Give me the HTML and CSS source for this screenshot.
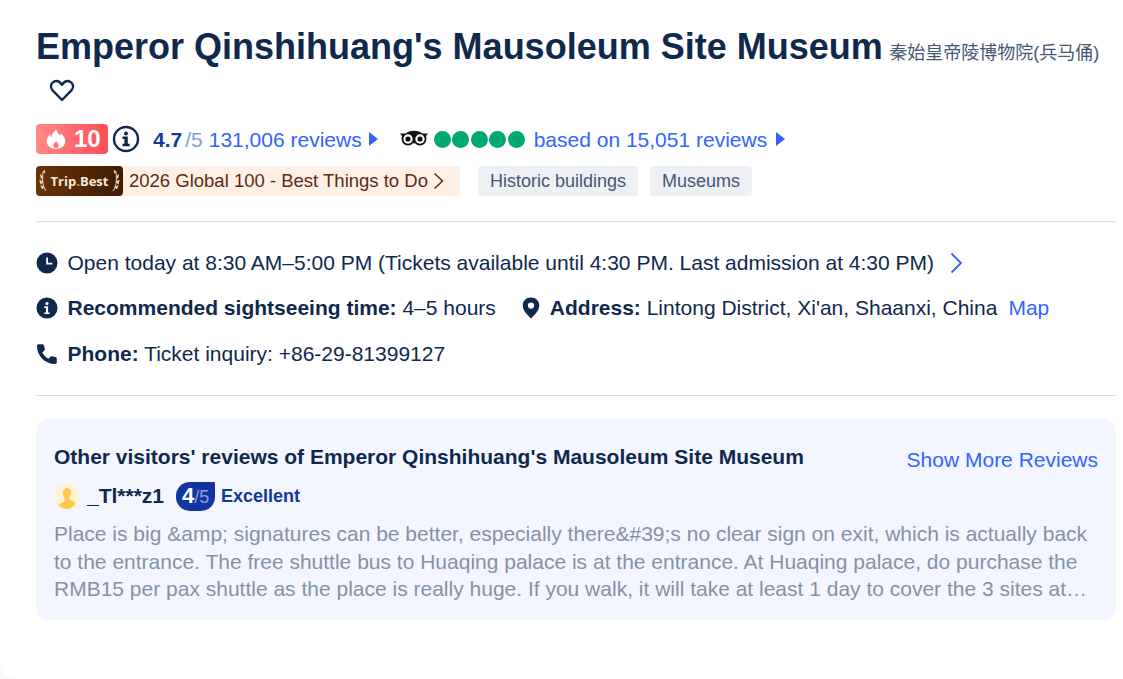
FILE: index.html
```html
<!DOCTYPE html>
<html lang="en">
<head>
<meta charset="utf-8">
<title>Emperor Qinshihuang's Mausoleum Site Museum</title>
<link rel="stylesheet" href="styles.css">
</head>
<body>
<main class="card">
  <header class="head">
    <h1 class="title">Emperor Qinshihuang's Mausoleum Site Museum</h1>
    <span class="subtitle">秦始皇帝陵博物院(兵马俑)</span>
    <div class="fav">
      <svg width="26" height="26" viewBox="0 0 26 26"><path d="M13 23 3.600 13.400C1 10.600 1.600 6.600 4.400 5c2.900-1.600 6.300-.6 8.600 2.800C15.300 4.400 18.700 3.400 21.600 5c2.800 1.600 3.400 5.600.8 8.400Z" fill="none" stroke="#0f294d" stroke-width="2.400" stroke-linejoin="round"/></svg>
    </div>
  </header>

  <div class="ratings">
    <span class="heat">
      <svg width="20" height="20" viewBox="0 0 20 20"><path d="M10.500.5c.5 3 2.200 4.500 3.500 6.200.5-.7.7-1.500.7-2.400C17.600 6.500 19.300 9.500 19.300 12.200c0 4.500-4 7.500-9.300 7.500S.7 16.700.7 12.200c0-3 1.700-5 3.400-6.700.1 1.300.5 2.300 1.300 3C5.500 5.300 7.800 2.500 10.500.5ZM10 12c-.4 1.300-2.700 2.700-2.700 4.700 0 1.500 1.200 2.300 2.700 2.300s2.700-.8 2.700-2.300c0-2-2.300-3.400-2.700-4.700Z" fill="#fff" fill-rule="evenodd"/></svg>
      <span>10</span>
    </span>
    <svg class="info-ring" width="28" height="28" viewBox="0 0 28 28"><circle cx="14" cy="14" r="12" fill="none" stroke="#0f294d" stroke-width="2.400"/><circle cx="14" cy="8.500" r="2" fill="#0f294d"/><path d="M10.500 11.500h5.300v7.300h1.900v2.400h-7.200v-2.400h1.900v-4.900h-1.900Z" fill="#0f294d"/></svg>
    <span class="score"><b>4.7</b><i>/5</i></span>
    <a class="link rev">131,006 reviews</a>
    <span class="tri"></span>
    <svg class="owl" width="28" height="18" viewBox="0 0 28 18"><path d="M0 3.500h5.500C8 1.500 11 .8 14 .8s6 .7 8.500 2.700H28l-2 2.600c1.500 3.800-.7 9.500-6 9.500-2.400 0-4.300-1.200-5.100-2.800L14 14.200l-.9-1.400C12.300 14.400 10.400 15.600 8 15.600c-5.300 0-7.500-5.700-6-9.500Z" fill="#111"/><circle cx="8" cy="9" r="4.700" fill="#fff"/><circle cx="20" cy="9" r="4.700" fill="#fff"/><circle cx="8" cy="9" r="2.600" fill="#111"/><circle cx="20" cy="9" r="2.600" fill="#111"/></svg>
    <span class="dots"><i></i><i></i><i></i><i></i><i></i></span>
    <a class="link based">based on 15,051 reviews</a>
    <span class="tri"></span>
  </div>

  <div class="tags">
    <span class="award">
      <span class="award-logo">
        <svg width="9" height="24" viewBox="0 0 9 24"><path d="M7 22C4 18 3 12 4 3" fill="none" stroke="#f3e0c4" stroke-width="1"/><path d="M4 3 5.500 1 5.800 4Zm-.3 5L1.500 5.500 2 9.500Zm.2 5L.8 11l.8 4Zm1.200 5L1.800 16.500l1.400 3.500Z" fill="#f3e0c4" stroke="#f3e0c4" stroke-width=".6"/></svg>
        <span class="award-name">Trip<em>.</em>Best</span>
        <svg class="flip" width="9" height="24" viewBox="0 0 9 24"><path d="M7 22C4 18 3 12 4 3" fill="none" stroke="#f3e0c4" stroke-width="1"/><path d="M4 3 5.500 1 5.800 4Zm-.3 5L1.500 5.500 2 9.500Zm.2 5L.8 11l.8 4Zm1.200 5L1.800 16.500l1.400 3.500Z" fill="#f3e0c4" stroke="#f3e0c4" stroke-width=".6"/></svg>
      </span>
      <span class="award-text">2026 Global 100 - Best Things to Do</span>
      <svg width="11" height="18" viewBox="0 0 11 18"><path d="M1.500 1.500 9.500 9l-8 7.500" fill="none" stroke="#5b2c12" stroke-width="1.500"/></svg>
    </span>
    <span class="tag">Historic buildings</span>
    <span class="tag">Museums</span>
  </div>

  <section class="facts">
    <div class="fact-row">
      <span class="fact">
        <svg class="ico" width="22" height="22" viewBox="0 0 22 22"><circle cx="11" cy="11" r="10.500" fill="#0f294d"/><path d="M10.200 5.500h1.800v5.300h4.400v1.800h-6.200Z" fill="#fff"/></svg>
        <span>Open today at 8:30 AM–5:00 PM (Tickets available until 4:30 PM. Last admission at 4:30 PM)</span>
      </span>
      <svg class="chev" width="14" height="22" viewBox="0 0 14 22"><path d="M2.500 1.500 12 11l-9.500 9.500" fill="none" stroke="#3264ff" stroke-width="1.800"/></svg>
    </div>
    <div class="fact-row">
      <span class="fact">
        <svg class="ico" width="22" height="22" viewBox="0 0 22 22"><circle cx="11" cy="11" r="10.500" fill="#0f294d"/><circle cx="11" cy="6.500" r="1.500" fill="#fff"/><path d="M8.300 9.200h3.800v6.200h1.600v1.700H8.300v-1.700h1.700v-4.500H8.300Z" fill="#fff"/></svg>
        <span><b>Recommended sightseeing time:</b> 4–5 hours</span>
      </span>
      <span class="fact addr">
        <svg class="ico" width="18" height="22" viewBox="0 0 18 22"><path d="M9 .5c4.700 0 8.300 3.500 8.300 8 0 5-5 9.800-8.300 13C5.700 18.300.7 13.500.7 8.500.7 4 4.300.5 9 .5Zm0 5a3.100 3.100 0 1 0 0 6.200 3.100 3.100 0 0 0 0-6.200Z" fill="#0f294d" fill-rule="evenodd"/></svg>
        <span><b>Address:</b> Lintong District, Xi'an, Shaanxi, China</span>
      </span>
      <a class="link map">Map</a>
    </div>
    <div class="fact-row">
      <span class="fact">
        <svg class="ico" width="22" height="22" viewBox="0 0 22 22"><path d="M1 3c0-1 .7-1.800 1.700-1.800h3.600c.9 0 1.500.6 1.700 1.400l.8 3.400c.1.600-.1 1.200-.5 1.600L6.300 9.600c1.300 2.600 3.500 4.800 6.100 6.100l2-2c.4-.4 1-.6 1.600-.5l3.400.8c.8.200 1.400.8 1.400 1.700v3.600c0 1-.8 1.700-1.800 1.700C9 21 1 13 1 3Z" fill="#0f294d"/></svg>
        <span><b>Phone:</b> Ticket inquiry: +86-29-81399127</span>
      </span>
    </div>
  </section>

  <section class="reviews">
    <div class="reviews-head">
      <h2 class="reviews-title">Other visitors' reviews of Emperor Qinshihuang's Mausoleum Site Museum</h2>
      <a class="link more">Show More Reviews</a>
    </div>
    <div class="reviewer">
      <svg class="avatar" width="26" height="26" viewBox="0 0 26 26"><circle cx="13" cy="13" r="13" fill="#fdf3d8"/><path d="M13 5c2.800 0 4.300 2.200 4.300 4.800 0 2-.9 3.700-2.100 4.700v1.300c0 .8 1 1.300 2.600 1.900 1.900.7 3.200 1.500 3.600 3A13 13 0 0 1 13 26c-3.300 0-6.200-1.300-8.400-3.300.4-1.500 1.700-2.300 3.600-3 1.600-.6 2.600-1.100 2.600-1.900v-1.300C9.600 13.500 8.700 11.800 8.700 9.800 8.700 7.200 10.200 5 13 5Z" fill="#fcc94d"/></svg>
      <span class="user">_Tl***z1</span>
      <span class="badge"><b>4</b><i>/5</i></span>
      <span class="grade">Excellent</span>
    </div>
    <p class="quote">Place is big &amp;amp; signatures can be better, especially there&amp;#39;s no clear sign on exit, which is actually back to the entrance. The free shuttle bus to Huaqing palace is at the entrance. At Huaqing palace, do purchase the RMB15 per pax shuttle as the place is really huge. If you walk, it will take at least 1 day to cover the 3 sites at…</p>
  </section>
</main>
</body>
</html>
```
FILE: styles.css
```css
* { box-sizing: border-box; }
html, body { margin: 0; height: 100%; overflow: hidden; }
body {
  background: #f9fafc;
  font-family: "Liberation Sans", "Noto Sans CJK SC", Arial, sans-serif;
  color: #0f294d;
}
.card {
  width: 1122px;
  height: 679px;
  background: #fff;
  border-radius: 0 0 0 16px;
  padding: 24px 6px 0 36px;
}
a { text-decoration: none; }
.link { color: #3264ff; }
.head { line-height: 46px; }
.title {
  display: inline;
  margin: 0;
  font-size: 36px;
  font-weight: 700;
  line-height: 46px;
  color: #0f294d;
}
.subtitle {
  margin-left: 2px;
  font-size: 18px;
  color: #455873;
}
.fav { height: 44px; padding: 0 0 0 13px; line-height: 0; }
.ratings {
  display: flex;
  align-items: center;
  height: 30px;
  margin-top: 3px;
  font-size: 21px;
}
.heat {
  display: flex;
  align-items: center;
  gap: 8px;
  width: 72px;
  height: 30px;
  padding-left: 10px;
  border-radius: 4px;
  background: linear-gradient(90deg, #ff8a87, #ff4d57);
  color: #fff;
  font-size: 24px;
  font-weight: 700;
}
.info-ring { margin-left: 4px; }
.score { margin-left: 13px; padding-top: 2px; }
.score b { color: #0c3f9c; }
.score i { margin-left: 3px; font-style: normal; color: #7fa3d2; }
.rev { margin-left: 6px; padding-top: 2px; }
.tri {
  width: 0;
  height: 0;
  margin-left: 7px;
  border-left: 9px solid #3264ff;
  border-top: 7px solid transparent;
  border-bottom: 7px solid transparent;
}
.owl { margin-left: 22px; }
.dots { display: flex; gap: 1.500px; margin-left: 6px; }
.dots i { width: 17px; height: 17px; border-radius: 50%; background: #00aa6c; }
.based { margin-left: 9px; padding-top: 2px; }
.based + .tri { margin-left: 9px; }
.tags {
  display: flex;
  align-items: center;
  height: 30px;
  margin-top: 12px;
}
.award {
  display: flex;
  align-items: center;
  width: 424px;
  height: 30px;
  background: #fff0e5;
  color: #5b2c12;
  font-size: 18.500px;
  border-radius: 4px 0 0 4px;
}
.award-logo {
  display: flex;
  align-items: center;
  justify-content: center;
  gap: 3px;
  width: 87px;
  height: 30px;
  border-radius: 4px;
  background: linear-gradient(90deg, #693207, #3f1c04);
}
.award-name { font-family: "Open Sans", "Liberation Sans", sans-serif; font-size: 13px; font-weight: 700; color: #f7e9d6; }
.award-name em { font-style: normal; color: #f5a623; }
.flip { transform: scaleX(-1); }
.award-text { margin: 0 5px 0 6px; }
.tag {
  display: flex;
  align-items: center;
  height: 30px;
  margin-left: 18px;
  padding: 0 12px;
  border-radius: 4px;
  background: #edf0f5;
  color: #455873;
  font-size: 18px;
}
.tag + .tag { margin-left: 12px; }
.facts {
  width: 1080px;
  margin-top: 25px;
  padding: 18px 0 18.500px;
  border-top: 1px solid #dadfe6;
  border-bottom: 1px solid #dadfe6;
  font-size: 21px;
}
.fact-row { display: flex; align-items: center; height: 45.500px; }
.fact { display: flex; align-items: center; }
.ico { flex: none; margin-right: 9.500px; }
.chev { margin-left: 15px; }
.addr { margin-left: 26px; }
.addr .ico { margin-right: 10px; }
.map { margin-left: 11px; }
.reviews {
  width: 1080px;
  height: 201px;
  margin-top: 23px;
  padding: 24px 18px 0;
  border-radius: 12px;
  background: #f3f6fe;
}
.reviews-head { display: flex; justify-content: space-between; }
.reviews-title { margin: 0; font-size: 21px; line-height: 28px; font-weight: 700; color: #0f294d; }
.more { margin-top: 4px; font-size: 21px; line-height: 26px; }
.reviewer { display: flex; align-items: center; height: 30px; margin-top: 8px; }
.user { margin-left: 7px; font-size: 21px; font-weight: 700; }
.badge {
  display: flex;
  align-items: baseline;
  justify-content: center;
  width: 39px;
  height: 29px;
  margin-left: 12px;
  padding-top: 1px;
  border-radius: 14px 1px 14px 14px;
  background: #1136a0;
  color: #fff;
  font-size: 22px;
}
.badge i { font-style: normal; font-size: 18px; color: #8ea0d8; }
.grade { margin-left: 6px; padding-top: 1px; font-size: 18px; font-weight: 700; color: #1136a0; }
.quote {
  margin: 9px 0 0;
  font-size: 21px;
  line-height: 27.500px;
  color: #8592a6;
}
```
